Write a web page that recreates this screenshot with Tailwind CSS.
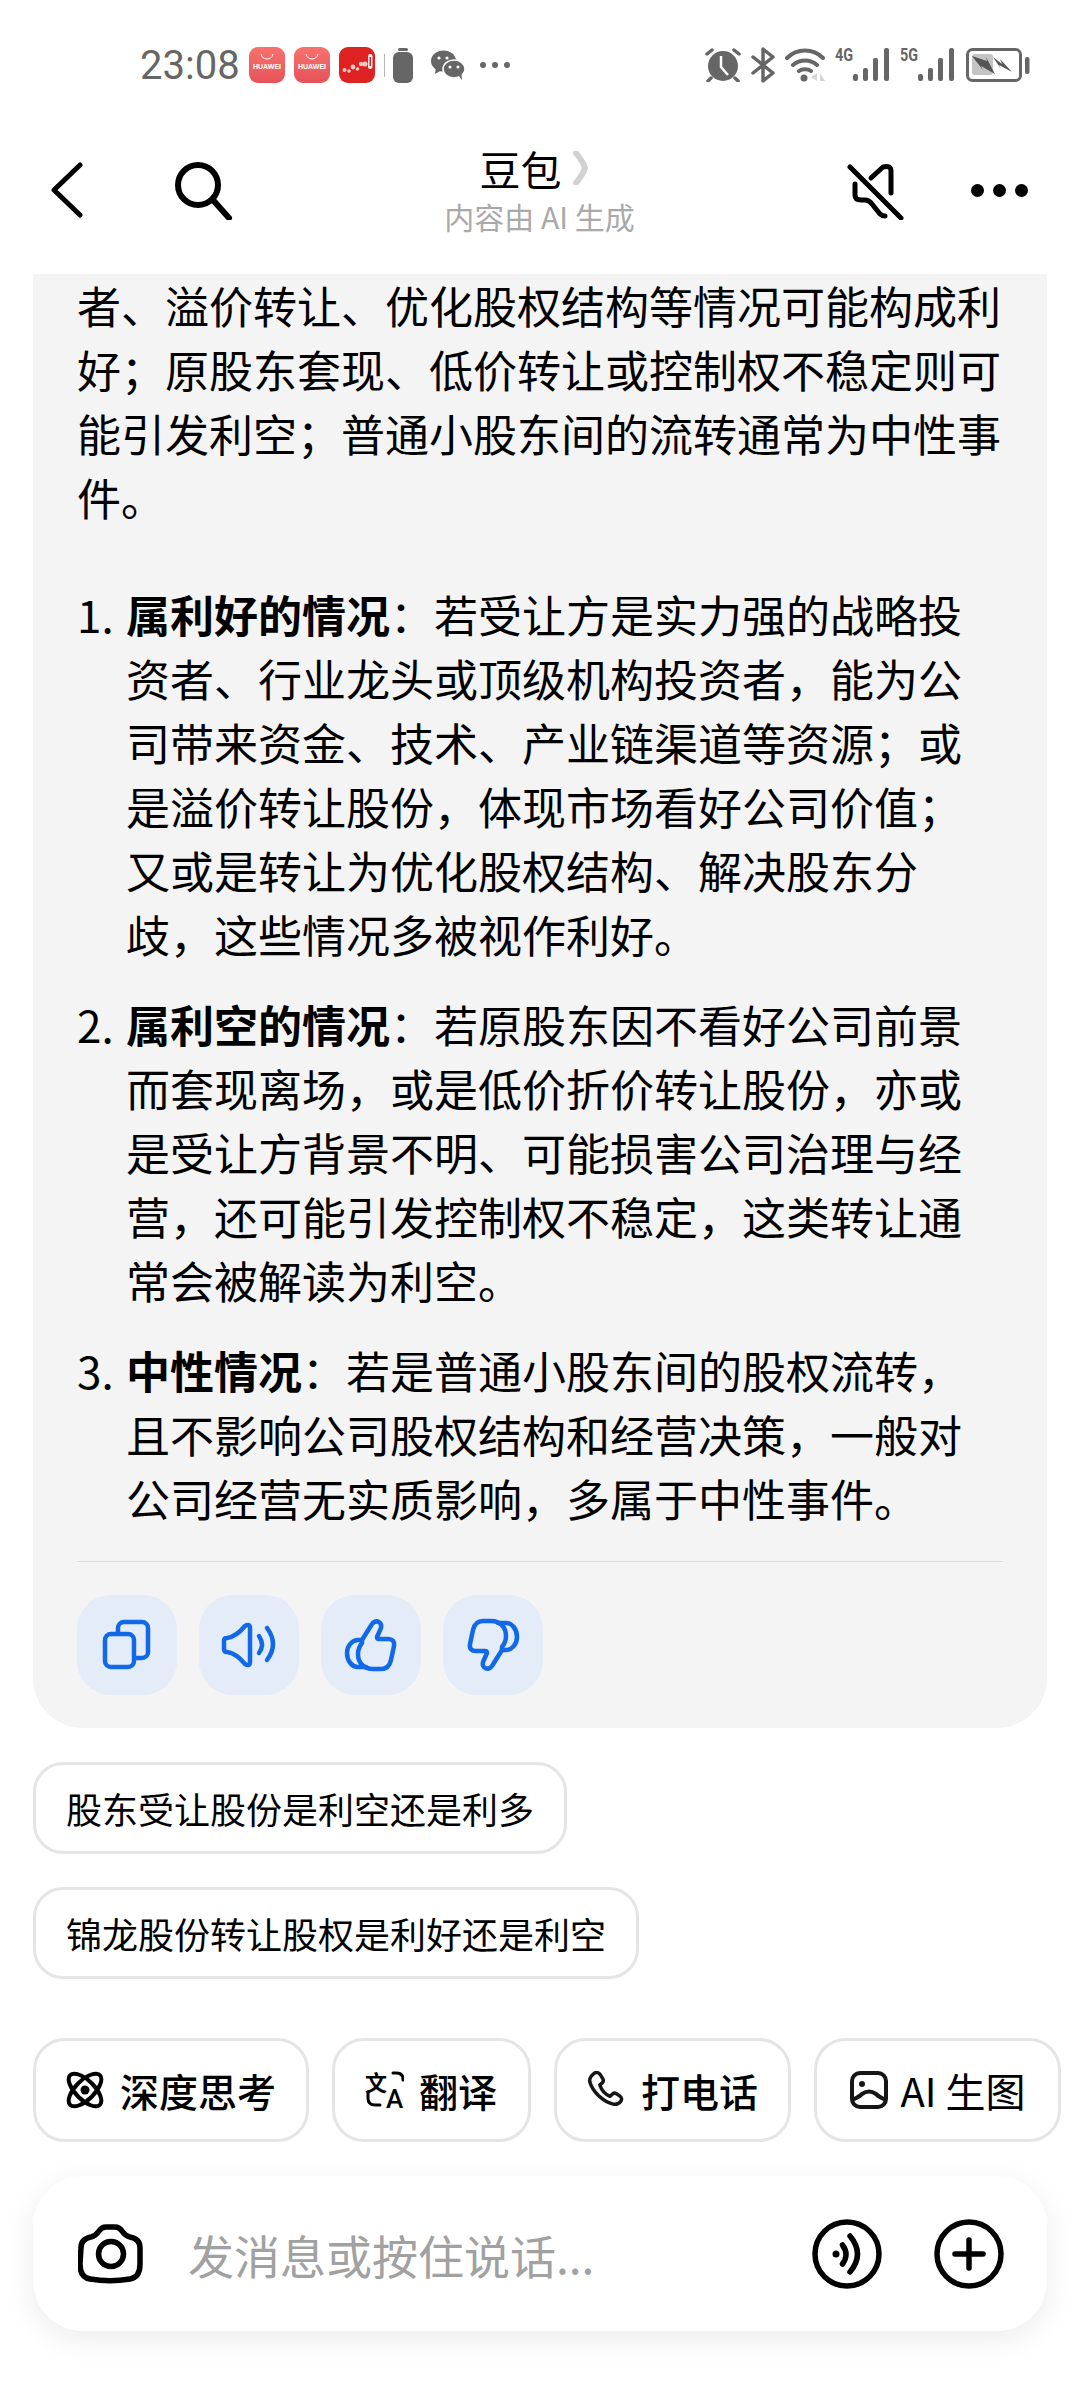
<!DOCTYPE html>
<html lang="zh-CN">
<head>
    <meta charset="UTF-8">
    <meta name="viewport" content="width=device-width, initial-scale=1.0">
    <title>豆包</title>
    <script src="https://cdn.jsdelivr.net/npm/@tailwindcss/browser@4"></script>
</head>
<body class="bg-white text-black font-['Noto_Sans_CJK_SC','Noto_Sans',sans-serif]">
<div class="w-[1080px] h-[2400px] overflow-hidden">

    <!-- Status bar -->
    <div class="h-[130px] flex items-center justify-between pl-[140px] pr-[50px] text-[#666666]">
        <div class="flex items-center">
            <span class="font-['Roboto',sans-serif] text-[40px] leading-none w-[109px] pt-[2px]">23:08</span>
            <div class="flex gap-[9px]">
                <div class="w-[36px] h-[36px] rounded-[9px] bg-gradient-to-b from-[#f7726c] to-[#e5525a] flex flex-col items-center text-white">
                    <svg width="14" height="7" viewBox="0 0 14 7" class="mt-[6px]"><path d="M1 1c1 3.500 3 5 6 5s5-1.500 6-5" fill="none" stroke="#fff" stroke-width="1"/></svg>
                    <span class="font-['Liberation_Sans',sans-serif] text-[7px] font-bold leading-none mt-[3px]">HUAWEI</span>
                </div>
                <div class="w-[36px] h-[36px] rounded-[9px] bg-gradient-to-b from-[#f7726c] to-[#e5525a] flex flex-col items-center text-white">
                    <svg width="14" height="7" viewBox="0 0 14 7" class="mt-[6px]"><path d="M1 1c1 3.500 3 5 6 5s5-1.500 6-5" fill="none" stroke="#fff" stroke-width="1"/></svg>
                    <span class="font-['Liberation_Sans',sans-serif] text-[7px] font-bold leading-none mt-[3px]">HUAWEI</span>
                </div>
                <div class="w-[36px] h-[36px] rounded-[9px] bg-[#de2121]">
                    <svg width="36" height="36" viewBox="0 0 36 36" fill="#f6c9c6">
                        <circle cx="5.500" cy="23" r="2"/><circle cx="10" cy="24" r="1.800"/><circle cx="14" cy="20" r="2.400"/>
                        <circle cx="18.500" cy="22" r="1.800"/><circle cx="22" cy="17" r="2.200"/><circle cx="26" cy="17" r="2.500"/>
                        <rect x="29" y="7" width="4.500" height="15" rx="2.200" fill="#fff" opacity="0.9"/>
                        <rect x="30.500" y="10" width="1.500" height="9" fill="#de2121"/>
                    </svg>
                </div>
            </div>
            <div class="w-[1px] h-[23px] bg-[#b5b5b5] ml-[9px]"></div>
            <!-- power bank -->
            <svg width="20" height="35" viewBox="0 0 20 35" class="ml-[8px]" fill="#666666">
                <rect x="5" y="0" width="10" height="3" rx="1.500"/>
                <rect x="0" y="4" width="20" height="31" rx="6"/>
            </svg>
            <!-- wechat -->
            <svg width="34" height="30" viewBox="0 0 34 30" class="ml-[18px]" fill="#666666">
                <ellipse cx="12.500" cy="11" rx="12.500" ry="10.500"/>
                <path d="M5 17l-1 7 7-4z"/>
                <ellipse cx="23" cy="19" rx="11" ry="9" stroke="#fff" stroke-width="1.500"/>
                <path d="M28 26l3 4-.500-6z"/>
                <circle cx="8" cy="8" r="1.600" fill="#fff"/><circle cx="16" cy="8" r="1.600" fill="#fff"/>
                <circle cx="19" cy="17" r="1.500" fill="#fff"/><circle cx="27" cy="17" r="1.500" fill="#fff"/>
            </svg>
            <div class="flex gap-[6px] ml-[15px]">
                <span class="w-[6px] h-[6px] rounded-full bg-[#666666]"></span>
                <span class="w-[6px] h-[6px] rounded-full bg-[#666666]"></span>
                <span class="w-[6px] h-[6px] rounded-full bg-[#666666]"></span>
            </div>
        </div>
        <div class="flex items-center">
            <!-- alarm -->
            <svg width="36" height="34" viewBox="0 0 36 34">
                <circle cx="18" cy="18" r="15" fill="#666666"/>
                <path d="M2 6l5-4M34 6l-5-4M6 30l-3 3M30 30l3 3" stroke="#666666" stroke-width="3.500" stroke-linecap="round"/>
                <path d="M16 8v11l7 8" fill="none" stroke="#fff" stroke-width="2.500"/>
            </svg>
            <!-- bluetooth -->
            <svg width="24" height="36" viewBox="0 0 24 36" class="ml-[10px]">
                <path d="M2 10l20 16-10 8V2l10 8L2 26" fill="none" stroke="#666666" stroke-width="3.500" stroke-linejoin="round" stroke-linecap="round"/>
            </svg>
            <!-- wifi -->
            <svg width="40" height="34" viewBox="0 0 40 34" class="ml-[10px]">
                <path d="M2 10c10-10 26-10 36 0M8 17c7-6 17-6 24 0M14 23c3-2.500 9-2.500 12 0" fill="none" stroke="#666666" stroke-width="4" stroke-linecap="round"/>
                <circle cx="19" cy="30" r="3.500" fill="#666666"/>
                <path d="M32 25l-6 4 6 4zM35 25l5 8h-5z" fill="#d5d5d5"/>
            </svg>
            <!-- 4G signal -->
            <div class="relative w-[54px] h-[34px] ml-[10px]">
                <span class="absolute left-0 -top-[2px] font-['Roboto',sans-serif] font-bold text-[18px] leading-[18px] scale-x-[0.8] origin-left">4G</span>
                <svg width="36" height="33" viewBox="0 0 36 33" class="absolute right-0 top-0" fill="#666666">
                    <rect x="0" y="26" width="5" height="7" rx="2"/><rect x="10" y="20" width="5" height="13" rx="2"/>
                    <rect x="20" y="10" width="5" height="23" rx="2"/><rect x="31" y="0" width="5" height="33" rx="2"/>
                </svg>
            </div>
            <!-- 5G signal -->
            <div class="relative w-[54px] h-[34px] ml-[11px]">
                <span class="absolute left-0 -top-[2px] font-['Roboto',sans-serif] font-bold text-[18px] leading-[18px] scale-x-[0.8] origin-left">5G</span>
                <svg width="36" height="33" viewBox="0 0 36 33" class="absolute right-0 top-0" fill="#666666">
                    <rect x="0" y="26" width="5" height="7" rx="2"/><rect x="10" y="20" width="5" height="13" rx="2"/>
                    <rect x="20" y="10" width="5" height="23" rx="2"/><rect x="31" y="0" width="5" height="33" rx="2"/>
                </svg>
            </div>
            <!-- battery charging -->
            <svg width="64" height="34" viewBox="0 0 64 34" class="ml-[12px]">
                <rect x="1.500" y="1.500" width="53" height="31" rx="5" fill="none" stroke="#666666" stroke-width="3"/>
                <rect x="6" y="6" width="21" height="21" rx="3" fill="#c4c4c4"/>
                <path d="M6 8L21 13L20 9L29 26L15 18L17 22zM27 9L36 16L34 11L46 24L33 17L35 21z" fill="#555555"/>
                <rect x="59" y="9" width="4.500" height="17" rx="2" fill="#666666"/>
            </svg>
        </div>
    </div>

    <!-- Chat header -->
    <div class="h-[144px] pb-[24px] pl-[51px] pr-[52px] grid grid-cols-[1fr_auto_1fr] items-center">
        <div class="flex items-center">
            <svg width="32" height="56" viewBox="0 0 32 56"><path d="M29 3L3 28l26 25" fill="none" stroke="#000" stroke-width="5" stroke-linecap="round" stroke-linejoin="round"/></svg>
            <svg width="60" height="60" viewBox="0 0 60 60" class="ml-[90px]">
                <circle cx="25" cy="25" r="20" fill="none" stroke="#000" stroke-width="6"/>
                <path d="M40 40l16 18" fill="none" stroke="#000" stroke-width="6" stroke-linecap="round"/>
            </svg>
        </div>
        <div class="flex flex-col items-center">
            <div class="flex items-center h-[44px] pr-[10px]">
                <span class="text-[41px] leading-[44px]">豆包</span>
                <svg width="16" height="34" viewBox="0 0 16 34" class="ml-[12px]"><path d="M3 2c4 5 8 11 9 15c-1 4-5 10-9 15" fill="none" stroke="#d2d2d2" stroke-width="6" stroke-linecap="round"/></svg>
            </div>
            <span class="text-[30px] leading-[36px] mt-[8px] text-[#a9a9a9]">内容由 AI 生成</span>
        </div>
        <div class="flex items-center justify-end">
            <svg width="60" height="60" viewBox="0 0 60 60" fill="none" stroke="#000" stroke-width="5" stroke-linecap="round" stroke-linejoin="round">
                <path d="M4 7L55 58"/>
                <path d="M25 18L37 7q8-2 8 4V33"/>
                <path d="M9 24V35q0 5 6 5h4q4 0 7 4l8 10q2 2 5 2"/>
            </svg>
            <div class="flex gap-[9px] ml-[65px]">
                <span class="w-[13px] h-[13px] rounded-full bg-black"></span>
                <span class="w-[13px] h-[13px] rounded-full bg-black"></span>
                <span class="w-[13px] h-[13px] rounded-full bg-black"></span>
            </div>
        </div>
    </div>

    <!-- Answer card -->
    <div class="flow-root mx-[33px] w-[1014px] h-[1454px] bg-[#f4f4f4] rounded-b-[50px] px-[44px] text-[44px] leading-[64px] whitespace-nowrap">
        <p class="-mt-[1px]">者、溢价转让、优化股权结构等情况可能构成利<br>好；原股东套现、低价转让或控制权不稳定则可<br>能引发利空；普通小股东间的流转通常为中性事<br>件。</p>

        <ol class="mt-[53px] flex flex-col gap-[26px]">
            <li class="flex">
                <span class="w-[49px] shrink-0">1.</span>
                <div><b class="font-bold">属利好的情况</b>：若受让方是实力强的战略投<br>资者、行业龙头或顶级机构投资者，能为公<br>司带来资金、技术、产业链渠道等资源；或<br>是溢价转让股份，体现市场看好公司价值；<br>又或是转让为优化股权结构、解决股东分<br>歧，这些情况多被视作利好。</div>
            </li>
            <li class="flex">
                <span class="w-[49px] shrink-0">2.</span>
                <div><b class="font-bold">属利空的情况</b>：若原股东因不看好公司前景<br>而套现离场，或是低价折价转让股份，亦或<br>是受让方背景不明、可能损害公司治理与经<br>营，还可能引发控制权不稳定，这类转让通<br>常会被解读为利空。</div>
            </li>
            <li class="flex">
                <span class="w-[49px] shrink-0">3.</span>
                <div><b class="font-bold">中性情况</b>：若是普通小股东间的股权流转，<br>且不影响公司股权结构和经营决策，一般对<br>公司经营无实质影响，多属于中性事件。</div>
            </li>
        </ol>

        <div class="h-[1px] bg-[#dcdcdc] mt-[31px]"></div>

        <div class="flex gap-[22px] mt-[33px]">
            <button class="w-[100px] h-[100px] rounded-[34px] bg-[#e4ecf7]">
                <svg width="100" height="100" viewBox="0 0 100 100" fill="none" stroke="#1169e8" stroke-width="4.500" stroke-linejoin="round">
                    <rect x="28" y="39" width="29" height="33" rx="6"/>
                    <path d="M41 39v-6a6 6 0 0 1 6-6h18a6 6 0 0 1 6 6v24a6 6 0 0 1-6 6h-8"/>
                </svg>
            </button>
            <button class="w-[100px] h-[100px] rounded-[34px] bg-[#e4ecf7]">
                <svg width="100" height="100" viewBox="0 0 100 100" fill="none" stroke="#1169e8" stroke-width="4.500" stroke-linecap="round" stroke-linejoin="round">
                    <path d="M25 46q0-3 3-3c8-1 13-6 18-12q5-3 5 2v34q0 5-5 2c-5-6-10-11-18-12q-3 0-3-3z"/>
                    <path d="M60 41q6 9 0 17M68 33q12 16 0 32"/>
                </svg>
            </button>
            <button class="w-[100px] h-[100px] rounded-[34px] bg-[#e4ecf7]">
                <svg width="100" height="100" viewBox="0 0 100 100" fill="none" stroke="#1169e8" stroke-width="4.500" stroke-linecap="round" stroke-linejoin="round">
                    <path d="M41 45L51 29q3-4 7-2q3 2 2 6l-4 9q0 2 2 2h9q7 0 6 7l-3 14q-2 9-10 9h-8c-9 0-15-6-15-15q0-6 4-11z"/>
                    <path d="M40 45h-3c-6 0-11 6-11 13c0 8 5 14 11 14h8"/>
                </svg>
            </button>
            <button class="w-[100px] h-[100px] rounded-[34px] bg-[#e4ecf7]">
                <svg width="100" height="100" viewBox="0 0 100 100" fill="none" stroke="#1169e8" stroke-width="4.500" stroke-linecap="round" stroke-linejoin="round">
                    <g transform="rotate(180 50 50)">
                        <path d="M41 45L51 29q3-4 7-2q3 2 2 6l-4 9q0 2 2 2h9q7 0 6 7l-3 14q-2 9-10 9h-8c-9 0-15-6-15-15q0-6 4-11z"/>
                        <path d="M40 45h-3c-6 0-11 6-11 13c0 8 5 14 11 14h8"/>
                    </g>
                </svg>
            </button>
        </div>
    </div>

    <!-- Suggested questions -->
    <div class="mt-[34px] ml-[33px] flex flex-col items-start gap-[33px]">
        <div class="h-[92px] px-[30px] flex items-center border-[3px] border-[#e5e5e5] rounded-[30px] text-[36px]">股东受让股份是利空还是利多</div>
        <div class="h-[92px] px-[30px] flex items-center border-[3px] border-[#e5e5e5] rounded-[30px] text-[36px]">锦龙股份转让股权是利好还是利空</div>
    </div>

    <!-- Quick actions -->
    <div class="mt-[59px] ml-[33px] flex gap-[23px] text-[39px] font-medium">
        <div class="w-[276px] h-[104px] flex items-center justify-center gap-[16px] border-[3px] border-[#e5e5e5] rounded-[32px]">
            <svg width="38" height="38" viewBox="0 0 38 38" fill="none" stroke="#000" stroke-width="4">
                <ellipse cx="19" cy="19" rx="21" ry="9.500" transform="rotate(45 19 19)"/>
                <ellipse cx="19" cy="19" rx="21" ry="9.500" transform="rotate(-45 19 19)"/>
                <circle cx="19" cy="19" r="4.500" fill="#000" stroke="none"/>
            </svg>
            <span>深度思考</span>
        </div>
        <div class="w-[199px] h-[104px] flex items-center justify-center gap-[15px] border-[3px] border-[#e5e5e5] rounded-[32px]">
            <div class="relative w-[38px] h-[38px] shrink-0">
                <svg width="38" height="38" viewBox="0 0 38 38" fill="none" stroke="#000" stroke-width="3" stroke-linecap="round">
                    <path d="M27 2h3q7 0 7 6v1"/>
                    <path d="M2 21v6q0 7 7 7h5"/>
                </svg>
                <span class="absolute -left-[1px] -top-[1px] text-[22px] leading-none font-bold">文</span>
                <span class="absolute left-[20px] top-[15px] font-['Roboto',sans-serif] text-[26px] leading-none font-medium">A</span>
            </div>
            <span>翻译</span>
        </div>
        <div class="w-[237px] h-[104px] flex items-center justify-center gap-[16px] border-[3px] border-[#e5e5e5] rounded-[32px]">
            <svg width="38" height="38" viewBox="0 0 24 24" fill="none" stroke="#161616" stroke-width="2.200" stroke-linejoin="round">
                <path d="M4.500 1.500c1.500-1 3-.5 4 1l1.500 2.500c.7 1.200.3 2-.7 2.800l-1.200 1c1 3 3.500 6 6.500 7.200l1.200-1.200c.8-.9 1.700-1.100 2.800-.4l2 1.300c1.400 1 1.600 2.400.6 3.600c-1.200 1.400-2.800 2-4.600 1.600C10 19.500 3.500 13 1.800 7c-.4-2 .7-4 2.700-5.500z"/>
            </svg>
            <span>打电话</span>
        </div>
        <div class="w-[247px] h-[104px] flex items-center justify-center gap-[13px] border-[3px] border-[#e5e5e5] rounded-[32px]">
            <svg width="38" height="38" viewBox="0 0 38 38" fill="none" stroke="#161616" stroke-width="4">
                <rect x="2" y="2" width="34" height="34" rx="8"/>
                <circle cx="12" cy="13" r="3" fill="#161616" stroke="none"/>
                <path d="M2 29q7-3 10-6q7-5 14 0q3 3 10 6"/>
            </svg>
            <span class="font-normal text-[40px]">AI 生图</span>
        </div>
    </div>

    <!-- Message input -->
    <div class="mt-[34px] mx-[33px] w-[1014px] h-[155px] rounded-[50px] bg-white shadow-[0_8px_30px_rgba(0,0,0,0.08)] flex items-center pl-[45px] pr-[43px]">
        <svg width="66" height="61" viewBox="0 0 66 61" fill="none" stroke="#000" stroke-width="5.500" class="shrink-0">
            <path d="M3 25c0-7 4-10 10-11c5-1 6-3 8-6c2-3 4-4 7-4h9c3 0 5 1 7 4c2 3 3 5 8 6c6 1 10 4 10 11v16c0 10-4 14-10 15c-12 2-28 2-40 0c-6-1-10-5-10-15z"/>
            <circle cx="33" cy="31" r="12.500"/>
        </svg>
        <span class="ml-[44px] flex-1 text-[46px] leading-none text-[#a1a1a1]">发消息或按住说话...</span>
        <svg width="70" height="70" viewBox="-35 -35 70 70" fill="none" stroke="#000" stroke-width="5.500" stroke-linecap="round" class="shrink-0">
            <circle r="32"/>
            <circle cx="-11" cy="0" r="3.500" fill="#000" stroke="none"/>
            <path d="M-4.500-9q7 9.500 0 19M3-18q15 18 0 36"/>
        </svg>
        <svg width="70" height="70" viewBox="-35 -35 70 70" fill="none" stroke="#000" stroke-width="5.500" stroke-linecap="round" class="shrink-0 ml-[52px]">
            <circle r="32"/>
            <path d="M-14 0H14M0-14V14"/>
        </svg>
    </div>
</div>
</body>
</html>
